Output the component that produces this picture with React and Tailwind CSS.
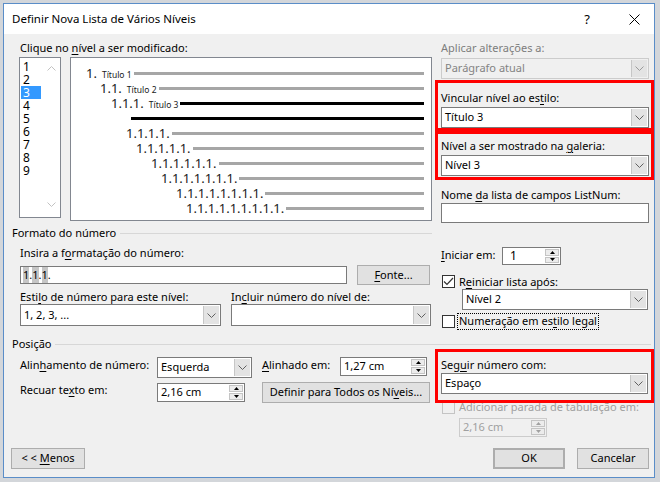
import React from 'react';

const ROWS = [
  { pad: 'pl-[15px]', num: '1.', title: 'Título 1' },
  { pad: 'pl-[29px]', num: '1.1.', title: 'Título 2' },
  { pad: 'pl-[40px]', num: '1.1.1.', title: 'Título 3', black: true },
  { pad: 'pl-[60px]', num: '', black: true },
  { pad: 'pl-[55px]', num: '1.1.1.1.' },
  { pad: 'pl-[65px]', num: '1.1.1.1.1.' },
  { pad: 'pl-[80px]', num: '1.1.1.1.1.1.' },
  { pad: 'pl-[90px]', num: '1.1.1.1.1.1.1.' },
  { pad: 'pl-[105px]', num: '1.1.1.1.1.1.1.1.' },
  { pad: 'pl-[115px]', num: '1.1.1.1.1.1.1.1.1.' },
];

function U({ children }) {
  return <span className="underline underline-offset-[2px]">{children}</span>;
}

function Chevron({ up = false, color = '#606060' }) {
  return (
    <svg width="9" height="5" viewBox="0 0 9 5" fill="none">
      <path d={up ? 'M0.5 4.5 L4.5 0.5 L8.5 4.5' : 'M0.5 0.5 L4.5 4.5 L8.5 0.5'} stroke={color} strokeWidth="1" />
    </svg>
  );
}

function Combo({ value, className = '', disabled = false }) {
  return (
    <div
      className={`flex border ${
        disabled ? 'border-[#cccccc] bg-[#f0f0f0] text-[#838383]' : 'border-[#7a7a7a] bg-white text-black'
      } ${className}`}
    >
      <div className="flex flex-1 items-center overflow-hidden whitespace-nowrap pl-[3px]">{value}</div>
      <div className="m-[1px] flex w-[16px] items-center justify-center bg-[#e3e3e3] border-l border-[#c6c6c6]">
        <Chevron color={disabled ? '#9a9a9a' : '#606060'} />
      </div>
    </div>
  );
}

function Tri({ up, color }) {
  return (
    <svg width="5" height="3" viewBox="0 0 5 3">
      <path d={up ? 'M2.5 0 L5 3 L0 3 Z' : 'M0 0 L5 0 L2.5 3 Z'} fill={color} />
    </svg>
  );
}

function Spin({ value, className = '', disabled = false }) {
  const c = disabled ? '#a0a0a0' : '#000000';
  return (
    <div
      className={`flex border ${
        disabled ? 'border-[#cccccc] bg-[#f0f0f0] text-[#a0a0a0]' : 'border-[#7a7a7a] bg-white text-black'
      } ${className}`}
    >
      <div className="flex flex-1 items-center whitespace-nowrap pl-[3px]">{value}</div>
      <div className="flex w-[15px] flex-col gap-[1px] py-[1px] pr-[1px]">
        <div className="flex flex-1 items-center justify-center border border-[#c4c4c4] bg-[#ececec]">
          <Tri up color={c} />
        </div>
        <div className="flex flex-1 items-center justify-center border border-[#c4c4c4] bg-[#ececec]">
          <Tri color={c} />
        </div>
      </div>
    </div>
  );
}

function Check({ checked = false, disabled = false }) {
  return (
    <div
      className={`flex h-[13px] w-[13px] shrink-0 items-center justify-center border ${
        disabled ? 'border-[#c4c4c4] bg-[#f0f0f0]' : 'border-[#333333] bg-white'
      }`}
    >
      {checked && (
        <svg width="11" height="9" viewBox="0 0 11 9" fill="none">
          <path d="M1 4.5 L4 7.5 L10 1" stroke="#333333" strokeWidth="1.2" />
        </svg>
      )}
    </div>
  );
}

function Btn({ children, className = '' }) {
  return (
    <div className={`flex items-center justify-center bg-[#e1e1e1] border border-[#adadad] ${className}`}>
      {children}
    </div>
  );
}

function Lbl({ children, className = '' }) {
  return <div className={`h-[14px] whitespace-nowrap leading-[14px] ${className}`}>{children}</div>;
}

export default function App() {
  return (
    <div className="h-[482px] w-[660px] overflow-hidden bg-[#d3d6da] pl-[3px] pt-[3px] font-['Noto_Sans',sans-serif] text-[11px] text-black">
      <div className="flex h-[475px] w-[652px] flex-col border border-[#5a8dc8]">
        {/* barra de título */}
        <div className="flex h-[30px] items-center bg-white pl-[8px] pr-[10px]">
          <div className="flex-1 text-[11.5px]">Definir Nova Lista de Vários Níveis</div>
          <div className="w-[20px] text-center text-[13px] leading-none">?</div>
          <div className="ml-[27px] flex w-[20px] justify-center">
            <svg width="11" height="11" viewBox="0 0 11 11">
              <path d="M0.5 0.5 L10.5 10.5 M10.5 0.5 L0.5 10.5" stroke="#000" strokeWidth="1" />
            </svg>
          </div>
        </div>

        <div className="flex flex-1 flex-col bg-[#f0f0f0] pl-[8px] pt-[7px]">
          <div className="flex gap-[3px]">
            {/* coluna esquerda */}
            <div className="flex w-[420px] flex-col">
              <Lbl className="pl-[8px]">
                Clique no <U>n</U>ível a ser modificado:
              </Lbl>
              <div className="mt-[2px] flex">
                <div className="ml-[7px] flex h-[161px] w-[42px] border border-[#828790] bg-white">
                  <div className="flex flex-1 flex-col pt-[2px]">
                    {[1, 2, 3, 4, 5, 6, 7, 8, 9].map((n) => (
                      <div
                        key={n}
                        className={`ml-[1px] h-[13px] w-[20px] pl-[2px] text-[12px] leading-[13px] ${
                          n === 3 ? 'bg-[#3399ff] text-white' : ''
                        }`}
                      >
                        {n}
                      </div>
                    ))}
                  </div>
                  <div className="flex w-[17px] flex-col items-center justify-between pb-[10px] pt-[8px]">
                    <Chevron up color="#c2c2c2" />
                    <Chevron color="#c2c2c2" />
                  </div>
                </div>
                <div className="ml-[9px] flex h-[164px] w-[362px] flex-col border border-[#828790] bg-white pr-[7px] pt-[8px]">
                  {ROWS.map((r, i) => (
                    <div key={i} className={`flex h-[15px] items-center ${r.pad}`}>
                      {r.num && (
                        <span className="flex items-baseline text-[13px] leading-[15px] text-[#1a1a1a]">
                          {r.num}
                          {r.title && <span className="ml-[5px] text-[8.5px]">{r.title}</span>}
                        </span>
                      )}
                      <div
                        className={`h-[3px] flex-1 ${r.num ? 'ml-[2px]' : ''} ${
                          r.black ? 'bg-black' : 'bg-[#a6a6a6]'
                        }`}
                      />
                    </div>
                  ))}
                </div>
              </div>

              <div className="mt-[5px] flex h-[14px] items-center">
                <span className="leading-[14px]">Formato do número</span>
                <div className="ml-[4px] h-px flex-1 bg-[#d7d7d7]" />
              </div>
              <Lbl className="mt-[6px] pl-[8px]">
                Insira a f<U>o</U>rmatação do número:
              </Lbl>
              <div className="mt-[5px] flex h-[20px] items-center">
                <div className="ml-[8px] flex h-[18px] w-[327px] items-center border border-[#7a7a7a] bg-white pl-[2px]">
                  <span className="bg-[#c6c6c6]">1</span>.<span className="bg-[#c6c6c6]">1</span>.
                  <span className="bg-[#c6c6c6]">1</span>.
                </div>
                <Btn className="ml-[10px] h-[20px] w-[73px]">
                  <span>
                    <U>F</U>onte...
                  </span>
                </Btn>
              </div>
              <div className="mt-[5px] flex">
                <Lbl className="w-[219px] pl-[8px]">
                  Esti<U>l</U>o de número para este nível:
                </Lbl>
                <Lbl>
                  In<U>c</U>luir número do nível de:
                </Lbl>
              </div>
              <div className="flex">
                <Combo value="1, 2, 3, ..." className="ml-[8px] h-[22px] w-[201px]" />
                <Combo value="" className="ml-[10px] h-[22px] w-[200px]" />
              </div>
            </div>

            {/* coluna direita */}
            <div className="flex w-[219px] flex-col">
              <Lbl className="pl-[6px] text-[#7d7d7d]">Aplicar alterações a:</Lbl>
              <Combo disabled value="Parágrafo atual" className="ml-[6px] mt-[3px] h-[21px] w-[208px]" />
              <div className="mt-[1px] flex h-[51px] flex-col border-[3px] border-[#ff0000] pt-[8px]">
                <Lbl className="pl-[3px]">
                  Vincular nível ao es<U>t</U>ilo:
                </Lbl>
                <Combo value="Título 3" className="ml-[3px] mt-[2px] h-[21px] w-[208px]" />
              </div>
              <div className="flex h-[49px] flex-col border-[3px] border-[#ff0000] pt-[5px]">
                <Lbl className="pl-[3px]">
                  Nível a ser mostrado na <U>g</U>aleria:
                </Lbl>
                <Combo value="Nível 3" className="ml-[3px] mt-[2px] h-[21px] w-[208px]" />
              </div>
              <Lbl className="mt-[8px] pl-[6px]">
                Nome <U>d</U>a lista de campos ListNum:
              </Lbl>
              <div className="ml-[6px] mt-[1px] h-[20px] w-[208px] border border-[#7a7a7a] bg-white" />

              <div className="mt-[24px] flex h-[18px] items-center">
                <Lbl className="mb-[3px] w-[67px] pl-[6px]">
                  <U>I</U>niciar em:
                </Lbl>
                <Spin value={<span className="pl-[4px] text-[12px]">1</span>} className="h-[18px] w-[59px]" />
              </div>
              <div className="mt-[10px] flex h-[13px] items-center">
                <div className="ml-[7px]">
                  <Check checked />
                </div>
                <span className="ml-[4px] whitespace-nowrap leading-[13px]">
                  R<U>e</U>iniciar lista após:
                </span>
              </div>
              <Combo value="Nível 2" className="ml-[27px] mt-[1px] h-[21px] w-[186px]" />
              <div className="mt-[3px] flex h-[17px] items-center">
                <div className="ml-[7px]">
                  <Check />
                </div>
                <span className="ml-[2px] flex h-[17px] items-center whitespace-nowrap border border-dotted border-black px-[1px]">
                  Numeração em es<U>t</U>ilo legal
                </span>
              </div>
            </div>
          </div>

          {/* Posição */}
          <div className="mt-[7px] flex h-[14px] items-center pr-[3px]">
            <span className="leading-[14px]">Posição</span>
            <div className="ml-[3px] h-px flex-1 bg-[#d7d7d7]" />
          </div>
          <div className="flex gap-[3px]">
            <div className="flex w-[420px] flex-col pt-[6px]">
              <div className="flex h-[21px] items-start">
                <Lbl className="mt-[1px] w-[145px] pl-[8px]">
                  Alin<U>h</U>amento de número:
                </Lbl>
                <Combo value="Esquerda" className="h-[21px] w-[95px]" />
                <Lbl className="mt-[1px] w-[88px] pl-[10px]">
                  <U>A</U>linhado em:
                </Lbl>
                <Spin value="1,27 cm" className="h-[19px] w-[87px]" />
              </div>
              <div className="mt-[4px] flex h-[21px] items-start">
                <Lbl className="mt-[1px] w-[145px] pl-[8px]">
                  Recuar te<U>x</U>to em:
                </Lbl>
                <Spin value="2,16 cm" className="mt-[1px] h-[19px] w-[88px]" />
                <Btn className="ml-[17px] h-[21px] w-[168px]">
                  <span>
                    Definir para Todos os Ní<U>v</U>eis...
                  </span>
                </Btn>
              </div>
            </div>
            <div className="flex w-[219px] flex-col">
              <div className="relative z-10 -mt-[2px] flex h-[54px] flex-col border-[3px] border-[#ff0000] pt-[6px]">
                <Lbl className="pl-[3px]">
                  Seg<U>u</U>ir número com:
                </Lbl>
                <Combo value="Espaço" className="ml-[3px] mt-[1px] h-[21px] w-[207px]" />
              </div>
              <div className="-mt-[3px] flex h-[14px] items-center">
                <div className="ml-[7px]">
                  <Check disabled />
                </div>
                <span className="ml-[4px] whitespace-nowrap text-[#a0a0a0]">Adicionar parada de tabulação em:</span>
              </div>
              <Spin disabled value="2,16 cm" className="ml-[24px] mt-[4px] h-[19px] w-[88px]" />
            </div>
          </div>

          {/* botões */}
          <div className="mt-[11px] flex h-[21px] pr-[5px]">
            <Btn className="-ml-[1px] h-[21px] w-[74px]">
              <span>
                &lt; &lt; <U>M</U>enos
              </span>
            </Btn>
            <div className="flex-1" />
            <Btn className="h-[21px] w-[72px] border-2 border-[#0078d7]">OK</Btn>
            <Btn className="ml-[12px] h-[21px] w-[72px]">Cancelar</Btn>
          </div>
        </div>
      </div>
    </div>
  );
}
